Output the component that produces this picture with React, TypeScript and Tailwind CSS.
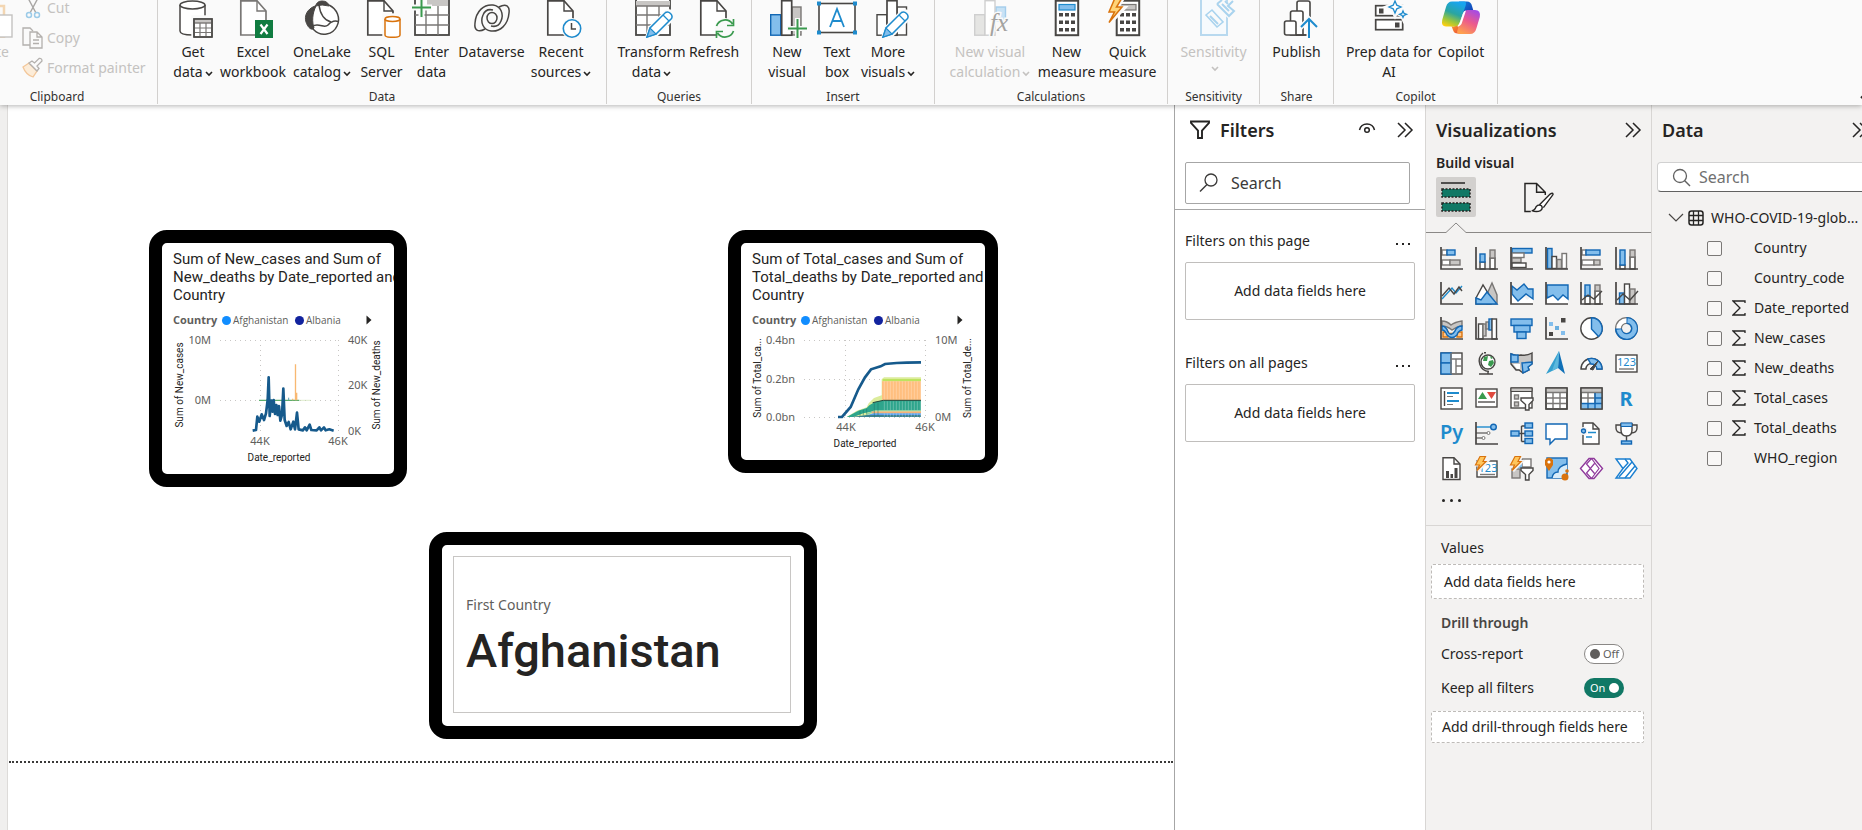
import React from "react";

type Kids = { children?: React.ReactNode };

const DK = "#484644";
const GY = "#797775";
const GF = "#c8c6c4";
const BF = "#83beec";
const BS = "#1267b4";
const LB = "#1e8bcd";
const GR = "#3a9a4e";
const OR = "#d9730d";

function R(p: { x: number; y: number; w: number; h: number; f?: string; s?: string; sw?: number }) {
  return <rect x={p.x} y={p.y} width={p.w} height={p.h} fill={p.f ?? "#fff"} stroke={p.s ?? DK} strokeWidth={p.sw ?? 1.4} />;
}
function L(p: { d: string; s?: string; f?: string; sw?: number }) {
  return <path d={p.d} stroke={p.s ?? DK} fill={p.f ?? "none"} strokeWidth={p.sw ?? 1.4} />;
}

/* ---------- ribbon icons (44 x 38) ---------- */

function Big({ children }: Kids) {
  return (
    <svg width="44" height="38" viewBox="0 0 44 38" fill="none" aria-hidden="true" className="shrink-0">
      {children}
    </svg>
  );
}
function Doc({ x = 8, s = DK }: { x?: number; s?: string }) {
  return (
    <g transform={`translate(${x} 0)`}>
      <L d="M0.8 0.8H17L26 11V35H0.8Z" s={s} f="#fff" sw={1.7} />
      <L d="M17 0.8V11H26" s={s} />
    </g>
  );
}
function Pencil() {
  return (
    <g>
      <path d="M17 38 L20 28 L36 12 Q40 10 43 13 Q44 16 42 19 L26 35Z" fill="#fafafa" stroke="#fafafa" strokeWidth="4" />
      <path d="M17 37 L20 28 L35.5 12.5 Q38 11 40.5 13.5 Q43 16 41.5 18.5 L26 34Z" fill="#fff" stroke={LB} strokeWidth="1.5" />
      <path d="M17 37 L20 28 L26 34Z" fill={BF} stroke={LB} strokeWidth="1.2" />
      <path d="M33 15L39 21" stroke={LB} strokeWidth="1.2" />
    </g>
  );
}
const GetDataIcon = (
  <Big>
    <path d="M9 5V31C9 33.5 14 35 21.5 35C29 35 34 33.5 34 31V5" fill="#fff" stroke={DK} strokeWidth="1.5" />
    <ellipse cx="21.5" cy="5" rx="12.5" ry="4" fill="#fff" stroke={DK} strokeWidth="1.5" />
    <R x={21} y={16} w={23} h={22} f="#fafafa" s="#fafafa" />
    <R x={23} y={19} w={18} h={18} />
    <R x={23} y={19} w={18} h={4} f={GF} s={GY} />
    <L d="M23 28H41M23 32.5H41M29 23V37M35 23V37" s={GY} sw={1.2} />
    <R x={23} y={19} w={18} h={18} f="none" />
  </Big>
);
const ExcelIcon = (
  <Big>
    <Doc x={9} s={GY} />
    <rect x="24" y="20" width="18" height="18" fill="#107c41" />
    <path d="M29.5 24.5L36.5 34M36.5 24.5L29.5 34" stroke="#fff" strokeWidth="2.2" />
  </Big>
);
const OneLakeIcon = (
  <Big>
    <ellipse cx="22" cy="18.5" rx="16" ry="16" fill="#fff" />
    <path d="M15 6C7 9 4 16 6 22C8 28 12 31 14 28C12 22 12 14 16 6Z" fill={DK} stroke={DK} />
    <path d="M15.500 6Q17 1 22 1Q28 1 29 6Q22 4 15.500 6Z" fill={DK} stroke={DK} />
    <path d="M29 5C37 9 41 18 37 26C33 35 21 37 14 30C11 27 13 25 17 25C22 25 25 28 28 25C31 21 36 20 38.500 22M19 5C20 13 24 20 31 22" stroke={DK} strokeWidth="1.5" />
  </Big>
);
const SqlIcon = (
  <Big>
    <Doc x={7} />
    <R x={23} y={14} w={20} h={24} f="#fafafa" s="#fafafa" />
    <path d="M25 19V35C25 36.5 28 37.3 32.5 37.3C37 37.3 40 36.5 40 35V19" fill="#fff" stroke={OR} strokeWidth="1.5" />
    <ellipse cx="32.5" cy="19" rx="7.5" ry="2.5" fill="#fff" stroke={OR} strokeWidth="1.5" />
  </Big>
);
const EnterIcon = (
  <Big>
    <R x={5} y={-3} w={34} h={38} sw={1.8} />
    <rect x="17" y="0" width="21" height="6" fill={GF} />
    <L d="M5 15H39M5 25H39M16 6V35M28 6V35" s={GY} />
    <path d="M11.5 -2V18M1 7.5H22" stroke="#fafafa" strokeWidth="6" />
    <path d="M11.5 -2V17M2 7.5H21" stroke={GR} strokeWidth="2" />
  </Big>
);
const swirlArm = "M15 29C8 33 4 30 5 23C6 11 14 4 23 5C31 6 34 14 31 21C29 26 25 27 21 26";
const DataverseIcon = (
  <Big>
    <path d={swirlArm} stroke={DK} strokeWidth="1.5" />
    <path d={swirlArm} transform="rotate(180 22 18)" stroke={DK} strokeWidth="1.5" />
    <ellipse cx="22" cy="18" rx="5" ry="5.5" stroke={DK} strokeWidth="1.5" />
  </Big>
);
const RecentIcon = (
  <Big>
    <Doc x={8} />
    <circle cx="33" cy="28.5" r="10.5" fill="#fafafa" />
    <circle cx="33" cy="28.5" r="8.7" fill="#fff" stroke={LB} strokeWidth="1.6" />
    <L d="M32.5 23V29H37" sw={1.5} />
  </Big>
);
const TransformIcon = (
  <Big>
    <R x={6} y={-2} w={34} h={37} sw={1.8} />
    <rect x="6" y="1" width="34" height="5" fill={GF} />
    <L d="M6 6H40M6 15H40M6 25H40M17 6V35M29 6V35" s={GY} />
    <Pencil />
  </Big>
);
const RefreshIcon = (
  <Big>
    <Doc x={8} />
    <circle cx="33" cy="28.5" r="10.5" fill="#fafafa" />
    <path d="M24.5 26A9 9 0 0 1 40.5 24M41.5 19V25.5H35M41.5 31A9 9 0 0 1 25.5 33M24.5 38V31.5H31" stroke={GR} strokeWidth="1.7" />
  </Big>
);
const NewVisualIcon = (
  <Big>
    <R x={5.7} y={14.7} w={10} h={20.5} f={BF} s={BS} />
    <R x={27} y={7} w={9} h={28} f={GF} s={GY} />
    <R x={16.7} y={0.7} w={10} h={34.5} sw={1.7} />
    <path d="M32.5 18V38M22 28.5H43" stroke="#fafafa" strokeWidth="5" />
    <path d="M32.5 19V38M23 28.5H42" stroke={GR} strokeWidth="2" />
  </Big>
);
const TextBoxIcon = (
  <Big>
    <R x={4} y={3.5} w={36} h={29} sw={1.6} />
    {[4, 40].map((x) => [3.5, 32.5].map((y) => <rect key={`${x}-${y}`} x={x - 2} y={y - 2} width="4" height="4" fill={LB} />))}
    <path d="M15 27L22 9L29 27M17.5 21H26.5" stroke={LB} strokeWidth="1.8" />
  </Big>
);
const MoreVisualsIcon = (
  <Big>
    <R x={11} y={14.7} w={10} h={20.5} />
    <R x={31} y={7} w={9.5} h={28} />
    <R x={21} y={0.7} w={10} h={34.5} sw={1.7} />
    <Pencil />
  </Big>
);
const NewCalcIcon = (
  <Big>
    <R x={6.7} y={14.7} w={10} h={20.5} f="#e5e5e3" s="#cfcfcf" />
    <R x={28} y={7} w={9.5} h={14} f="#c7e2f5" s="#a3cdec" />
    <R x={17} y={0.7} w={10} h={34.5} s="#cfcfcf" />
    <text x="22" y="31" fontFamily="Liberation Serif, serif" fontStyle="italic" fontSize="25" fill="#a3a2a0" stroke="#fafafa" strokeWidth="3" paintOrder="stroke">fx</text>
  </Big>
);
function Calc({ x = 10, screen = BF }: { x?: number; screen?: string }) {
  return (
    <g transform={`translate(${x} 0)`}>
      <R x={0.7} y={0.7} w={22.5} h={34.5} sw={2} />
      <R x={4} y={4.5} w={16} h={5.5} f={screen} s={screen === BF ? LB : GY} sw={1.2} />
      {[4, 10, 16].map((cx) => [13, 20.5, 28].map((cy) => <rect key={`${cx}-${cy}`} x={cx} y={cy} width="4" height="3.5" fill={DK} />))}
    </g>
  );
}
const QuickIcon = (
  <Big>
    <Calc x={10} screen={GF} />
    <path d="M9 -2L1 13H8L2 25L18 8H11L17 -2Z" fill="#ffd479" stroke="#fafafa" strokeWidth="4" />
    <path d="M9 -2L3 12H8.5L3 22.5L16 7H10.5L16 -2Z" fill="#ffd479" stroke={OR} strokeWidth="1.5" />
  </Big>
);
const SensitivityIcon = (
  <Big>
    <R x={9} y={-1} w={26} h={36} f="#f6fafd" s="#b8d9ef" sw={2} />
    <path d="M30 -1L44 12L38 18L24 5Z" fill="#fafafa" stroke="#fafafa" strokeWidth="3" />
    <path d="M14 15L20 10L31 22L25 27Z" fill="#fafafa" stroke="#a9d3ee" strokeWidth="1.6" />
    <path d="M18 16L26 24M25 4L37 16L42 11L36 6L41 1M25 4L30 0" stroke="#a9d3ee" strokeWidth="2" />
    <path d="M30 4L37 11M33 1L36 4" stroke="#a9d3ee" strokeWidth="2" />
  </Big>
);
const PublishIcon = (
  <Big>
    <path d="M22 35V3Q22 1 24 1H33Q35 1 35 3V35Z" fill="#fff" stroke={DK} strokeWidth="1.6" />
    <path d="M15.5 35V13Q15.5 11 17.5 11H26Q28 11 28 13V35Z" fill="#fff" stroke={DK} strokeWidth="1.6" />
    <path d="M9.5 23Q9.5 21 11.5 21H19Q21 21 21 23V35H11.5Q9.5 35 9.5 33Z" fill="#fff" stroke={DK} strokeWidth="1.6" />
    <path d="M21 35H33" stroke={DK} strokeWidth="1.6" />
    <path d="M34 17V38M25 28L34 19L43 28" stroke="#fafafa" strokeWidth="5" />
    <path d="M34 19V38M26 27L34 19L42 27" stroke={LB} strokeWidth="2" />
  </Big>
);
const PrepIcon = (
  <Big>
    <R x={8.7} y={5.7} w={27} h={10} sw={1.7} />
    <R x={8.7} y={19.7} w={27} h={10} sw={1.7} />
    <rect x="12" y="8.5" width="4.5" height="5" fill={DK} />
    <rect x="28" y="22.5" width="4.5" height="5" fill={DK} />
    <path d="M28 -1L30.5 4.5L36 7L30.5 9.5L28 15L25.5 9.5L20 7L25.5 4.5ZM36.5 9L38 12.5L41 14L38 15.5L36.5 19L35 15.5L32 14L35 12.5Z" fill="#fafafa" stroke="#fafafa" strokeWidth="4" />
    <path d="M28 1L29.8 5.2L34 7L29.8 8.8L28 13L26.2 8.8L22 7L26.2 5.2ZM36 11L37 13.3L39.5 14.3L37 15.3L36 17.5L35 15.3L32.5 14.3L35 13.3Z" fill="#fff" stroke={LB} strokeWidth="1.3" />
  </Big>
);
const CopilotIcon = (
  <Big>
    <defs>
      <linearGradient id="cpA" x1="0.6" y1="0" x2="0.2" y2="1">
        <stop offset="0" stopColor="#18a5f0" />
        <stop offset="0.45" stopColor="#2aa5a0" />
        <stop offset="0.75" stopColor="#9cc63b" />
        <stop offset="1" stopColor="#ffcf0f" />
      </linearGradient>
      <linearGradient id="cpB" x1="0.8" y1="0" x2="0.3" y2="1">
        <stop offset="0" stopColor="#a24be8" />
        <stop offset="0.5" stopColor="#ec5a8c" />
        <stop offset="1" stopColor="#ffa04e" />
      </linearGradient>
      <linearGradient id="cpC" x1="0" y1="0" x2="1" y2="1">
        <stop offset="0" stopColor="#1286dc" />
        <stop offset="1" stopColor="#1435b0" />
      </linearGradient>
      <linearGradient id="cpD" x1="0" y1="0" x2="1" y2="1">
        <stop offset="0" stopColor="#f89a2a" />
        <stop offset="1" stopColor="#ec4a3c" />
      </linearGradient>
    </defs>
    <path d="M20 1.5H28Q32 1.5 33 6L34.5 11H29Q25 11 24 14Z" fill="url(#cpC)" />
    <path d="M14 26.5Q17 26.5 18 24L23 33.5H18.5Q15 33.5 14 30L12.5 26Z" fill="url(#cpD)" />
    <path d="M13 1.5H25Q28 1.5 26.5 6L21 22Q19.5 26.5 15 26.5H7Q2 26.5 3.2 20L7 7Q8.5 1.5 13 1.5Z" fill="url(#cpA)" />
    <path d="M31 34H21Q17 34 18.5 30L24 14Q25.5 10 29 10H36Q42 10 40.8 17L37.5 28Q36 34 31 34Z" fill="url(#cpB)" />
    <path d="M21 22L24.5 12Q25.3 10.5 27 10.5L22.5 24Q21.5 26.3 18 26.5Q20 25.5 21 22Z" fill="#fff" />
  </Big>
);

/* ---------- ribbon ---------- */

function Caret() {
  return (
    <svg width="8" height="6" viewBox="0 0 8 6" className="mt-1 ml-0.5 shrink-0" aria-hidden="true">
      <path d="M1 1L4 4L7 1" fill="none" stroke="currentColor" strokeWidth="1.6" />
    </svg>
  );
}
function Tool({ icon, a, b, caret, w, off }: { icon: React.ReactNode; a: string; b?: string; caret?: boolean; w: string; off?: boolean }) {
  return (
    <button type="button" disabled={off} className={`flex shrink-0 flex-col items-center text-sm leading-5 whitespace-nowrap ${w} ${off ? "text-[#c4c2c0]" : "text-[#252423]"}`}>
      {icon}
      <span className="mt-1">{a}</span>
      {(b || caret) && (
        <span className="flex items-center">
          {b}
          {caret && <Caret />}
        </span>
      )}
    </button>
  );
}
function Group({ name, w, children }: Kids & { name: string; w: string }) {
  return (
    <section aria-label={name} className={`flex h-[104px] shrink-0 flex-col border-r border-[#d2d0ce] ${w}`}>
      <div className="flex flex-1 items-start">{children}</div>
      <div className="text-center text-xs leading-[14px] text-[#323130]">{name}</div>
    </section>
  );
}

function Ribbon() {
  return (
    <header className="relative z-10 flex h-[105px] shrink-0 overflow-hidden bg-[#fafafa] shadow-[0_1px_5px_rgba(0,0,0,0.3)]">
      <div className="-ml-[43px] flex min-w-0">
        <Group name="Clipboard" w="w-[201px]">
          <button type="button" disabled className="mr-1 flex w-[60px] flex-col items-end text-sm leading-5 text-[#c4c2c0]">
            <svg width="44" height="38" viewBox="0 0 44 38" fill="none" aria-hidden="true">
              <path d="M4 6H31V37H4Z" stroke="#f3d6b2" strokeWidth="2.5" />
              <R x={20} y={15} w={19} h={22} s="#c4c2c0" />
            </svg>
            <span className="mt-1 pr-2">Paste</span>
          </button>
          <div className="-mt-[7px] flex flex-col text-sm leading-[30px] whitespace-nowrap text-[#c4c2c0]">
            <button type="button" disabled className="flex items-center gap-0.5">
              <svg width="24" height="24" viewBox="0 0 24 24" fill="none" aria-hidden="true">
                <path d="M7 2L15 17M17 2L9 17" stroke="#a8a6a4" strokeWidth="1.4" />
                <circle cx="8" cy="19" r="2.5" stroke="#9ccbe8" strokeWidth="1.5" />
                <circle cx="16" cy="19" r="2.5" stroke="#9ccbe8" strokeWidth="1.5" />
              </svg>
              Cut
            </button>
            <button type="button" disabled className="flex items-center gap-0.5">
              <svg width="24" height="24" viewBox="0 0 24 24" fill="none" aria-hidden="true">
                <path d="M9 19H2V2H9L12 5" stroke="#b3b0ad" strokeWidth="1.3" />
                <path d="M9 6H16L21 11V22H9ZM16 6V11H21M12 14H18M12 17.5H18" stroke="#b3b0ad" strokeWidth="1.3" />
              </svg>
              Copy
            </button>
            <button type="button" disabled className="flex items-center gap-0.5">
              <svg width="24" height="24" viewBox="0 0 24 24" fill="none" aria-hidden="true">
                <path d="M2 11L8 7L16 15L12 21Q5 19 2 11Z" fill="#fcecd8" stroke="#f3c79a" strokeWidth="1.3" />
                <path d="M8 7L11 5L13.500 7L18 2.500Q21 2 21 5L16 10L18 12.500L16 15Z" fill="#fafafa" stroke="#b3b0ad" strokeWidth="1.3" />
              </svg>
              Format painter
            </button>
          </div>
        </Group>
        <Group name="Data" w="w-[449px] [&>div:first-child]:pl-3">
          <Tool icon={GetDataIcon} a="Get" b="data" caret w="w-[46px]" />
          <Tool icon={ExcelIcon} a="Excel" b="workbook" w="w-[74px]" />
          <Tool icon={OneLakeIcon} a="OneLake" b="catalog" caret w="w-16" />
          <Tool icon={SqlIcon} a="SQL" b="Server" w="w-[55px]" />
          <Tool icon={EnterIcon} a="Enter" b="data" w="w-[45px]" />
          <Tool icon={DataverseIcon} a="Dataverse" w="w-[75px]" />
          <Tool icon={RecentIcon} a="Recent" b="sources" caret w="w-16" />
        </Group>
        <Group name="Queries" w="w-[145px] [&>div:first-child]:pl-3">
          <Tool icon={TransformIcon} a="Transform" b="data" caret w="w-[65px]" />
          <Tool icon={RefreshIcon} a="Refresh" w="w-[60px]" />
        </Group>
        <Group name="Insert" w="w-[183px] [&>div:first-child]:pl-[10px]">
          <Tool icon={NewVisualIcon} a="New" b="visual" w="w-[50px]" />
          <Tool icon={TextBoxIcon} a="Text" b="box" w="w-[50px]" />
          <Tool icon={MoreVisualsIcon} a="More" b="visuals" caret w="w-[52px]" />
        </Group>
        <Group name="Calculations" w="w-[233px] [&>div:first-child]:pl-[9px]">
          <Tool icon={NewCalcIcon} a="New visual" b="calculation" caret off w="w-[92px]" />
          <Tool icon={<Big><Calc /></Big>} a="New" b="measure" w="w-[61px]" />
          <Tool icon={QuickIcon} a="Quick" b="measure" w="w-[61px]" />
        </Group>
        <Group name="Sensitivity" w="w-[92px] [&>div:first-child]:justify-center">
          <Tool icon={SensitivityIcon} a="Sensitivity" caret off w="w-[70px]" />
        </Group>
        <Group name="Share" w="w-[74px] [&>div:first-child]:justify-center">
          <Tool icon={PublishIcon} a="Publish" w="w-[60px]" />
        </Group>
        <Group name="Copilot" w="w-[164px] [&>div:first-child]:pl-2">
          <Tool icon={PrepIcon} a="Prep data for" b="AI" w="w-[94px]" />
          <Tool icon={CopilotIcon} a="Copilot" w="w-[50px]" />
        </Group>
      </div>
      <button type="button" aria-label="Collapse ribbon" className="-mr-[10px] mb-1 ml-auto self-end">
        <svg width="12" height="10" viewBox="0 0 12 10" fill="none" aria-hidden="true">
          <path d="M1 7L6 2L11 7" stroke="#252423" strokeWidth="2" />
        </svg>
      </button>
    </header>
  );
}

/* ---------- report canvas ---------- */

function Legend({ arrow }: { arrow: string }) {
  return (
    <div className="mt-2 flex h-4 items-center font-['Open_Sans','Noto_Sans',sans-serif] text-[10px] leading-4 text-[#605e5c]">
      <b className="w-[49px] text-[11px] font-bold">Country</b>
      <i className="mr-0.5 size-[9px] rounded-full bg-[#118dff]" />
      <span className="w-[62px]">Afghanistan</span>
      <i className="mr-0.5 size-[9px] rounded-full bg-[#12239e]" />
      <span>Albania</span>
      <button type="button" aria-label="Next" className={`ml-auto ${arrow}`}>
        <svg width="6" height="10" viewBox="0 0 6 10" aria-hidden="true"><path d="M0.5 0.5L5.5 5L0.5 9.5Z" fill="#252423" /></svg>
      </button>
    </div>
  );
}
function Lab({ x, y, a = "middle", children }: Kids & { x: number; y: number; a?: "start" | "middle" | "end" }) {
  return <text x={x} y={y + 4} textAnchor={a} fontSize="11" fill="#605e5c">{children}</text>;
}
function Axis({ x, y, r, children }: Kids & { x: number; y: number; r?: boolean }) {
  return (
    <text transform={`translate(${x} ${y})${r ? " rotate(-90)" : ""}`} dy="4" textAnchor="middle" fontSize="10" fontFamily="Roboto, sans-serif" fill="#252423">
      {children}
    </text>
  );
}

const casesLine =
  "M338 632L348 630L352 590L358 605L365 583L372 600L378 580L383 540L386 472L389 588L394 542L398 575L401 540L405 582L409 555L413 585L417 558L421 602L426 585L430 506L434 600L440 618L446 606L452 628L460 605L465 628L471 578L476 628L489 631L495 622L500 631L509 614L514 630L530 631L538 622L543 631L552 622L557 631L568 628L581 632";

function CasesCard() {
  return (
    <article className="absolute top-[125px] left-[140px] w-[258px] rounded-[18px] border-[13px] border-black bg-white">
      <div className="overflow-hidden rounded-[5px] pt-[7px] pl-[11px]">
        <h2 className="font-[Roboto] text-[15px] leading-[18px] whitespace-nowrap text-[#252423]">
          Sum of New_cases and Sum of<br />New_deaths by Date_reported and<br />Country
        </h2>
        <Legend arrow="mr-[22px]" />
        <svg width="232" height="146" viewBox="0 0 232 146" fill="none" className="-ml-[11px]" role="img" aria-label="New cases and deaths">
          <path d="M58 12.5H177M58 72.5H177M98.5 12V103M176.5 12V103" stroke="#c8c6c4" strokeDasharray="1 4" />
          <Lab x={49} y={12} a="end">10M</Lab>
          <Lab x={49} y={72} a="end">0M</Lab>
          <Lab x={186} y={12} a="start">40K</Lab>
          <Lab x={186} y={57} a="start">20K</Lab>
          <Lab x={186} y={103} a="start">0K</Lab>
          <Lab x={98} y={113}>44K</Lab>
          <Lab x={176} y={113}>46K</Lab>
          <Axis x={117} y={129}>Date_reported</Axis>
          <Axis x={17} y={57} r>Sum of New_cases</Axis>
          <Axis x={214} y={57} r>Sum of New_deaths</Axis>
          <g transform="translate(-22 -108) scale(0.33333)">
            <path d="M357 541H478" stroke="#5cae6c" strokeWidth="4" />
            <path d="M480 541H512" stroke="#cfe3b4" strokeWidth="2" />
            <path d="M466.5 541V433M470 541V518M458 541V536" stroke="#f8b872" strokeWidth="4" />
            <path d="M446 541V533" stroke="#5b9fb4" strokeWidth="3" />
            <path d={casesLine} stroke="#165a8c" strokeWidth="8" strokeLinejoin="round" />
          </g>
        </svg>
      </div>
    </article>
  );
}

function TotalsCard() {
  const bars = Array.from({ length: 13 }, (_, i) => 493 + i * 9);
  return (
    <article className="absolute top-[125px] left-[719px] w-[270px] rounded-[18px] border-[13px] border-black bg-white">
      <div className="overflow-hidden rounded-[5px] pt-[7px] pl-[11px]">
        <h2 className="font-[Roboto] text-[15px] leading-[18px] whitespace-nowrap text-[#252423]">
          Sum of Total_cases and Sum of<br />Total_deaths by Date_reported and<br />Country
        </h2>
        <Legend arrow="mr-[22px]" />
        <svg width="244" height="132" viewBox="0 0 244 132" fill="none" className="-ml-[11px]" role="img" aria-label="Total cases and deaths">
          <path d="M63 12.5H185M63 51.5H185M63 89.5H185M104.5 12V89M184.5 12V89" stroke="#c8c6c4" strokeDasharray="1 4" />
          <Lab x={54} y={12} a="end">0.4bn</Lab>
          <Lab x={54} y={51} a="end">0.2bn</Lab>
          <Lab x={54} y={89} a="end">0.0bn</Lab>
          <Lab x={194} y={12} a="start">10M</Lab>
          <Lab x={194} y={89} a="start">0M</Lab>
          <Lab x={105} y={99}>44K</Lab>
          <Lab x={184} y={99}>46K</Lab>
          <Axis x={124} y={115}>Date_reported</Axis>
          <Axis x={16} y={50} r>Sum of Total_ca...</Axis>
          <Axis x={226} y={50} r>Sum of Total_de...</Axis>
          <g transform="translate(-21 -108) scale(0.33333)">
            <path d="M380 591L410 572L440 562L446 550L462 534L485 526L485 478L492 472H603V591Z" fill="#dcec9c" />
            <path d="M486 484H603V540H486Z" fill="#ffbf7f" />
            <path d="M488 480H603" stroke="#b5e04c" strokeWidth="5" />
            <path d="M380 591L415 572L440 564L448 556L465 546L490 541H603V572H470L430 580L400 591Z" fill="#2ea58c" />
            <path d="M458 548L490 541H603" stroke="#25483f" strokeWidth="3" />
            <path d="M440 583L465 572H603" stroke="#8fd0a2" strokeWidth="4" />
            <path d="M455 577H603" stroke="#f4b07a" strokeWidth="5" />
            <path d="M440 586L460 580H603V586Z" fill="#5c9ff0" />
            <path d="M395 591L440 585H603V591Z" fill="#3c8291" />
            {bars.map((x) => <path key={x} d={`M${x} 484V538M${x} 544V571M${x} 580V590`} stroke="#ffffff" strokeOpacity="0.4" strokeWidth="2" />)}
            <path d="M420 572V588M430 570V586M440 566V584M463 550V590M474 548V588" stroke="#1d7466" strokeOpacity="0.5" strokeWidth="3" />
            <path d="M354 591H366L392 561L415 508L435 472L453 448L482 439L495 432L530 429L560 428L603 427" stroke="#165a8c" strokeWidth="8" />
          </g>
        </svg>
      </div>
    </article>
  );
}

function Canvas() {
  return (
    <main className="flex min-w-0 flex-1 flex-col bg-white px-px">
      <div className="relative h-[658px] shrink-0 overflow-hidden border-b-2 border-dotted border-[#3b3a39]">
        <CasesCard />
        <TotalsCard />
        <article className="absolute top-[427px] left-[420px] h-[207px] w-[388px] rounded-[18px] border-[13px] border-black bg-white pt-[11px] pr-[13px] pb-[13px] pl-[11px]">
          <div className="flex h-full flex-col justify-center border border-[#c8c6c4] pt-3 pl-3">
            <p className="text-sm leading-5 text-[#605e5c]">First Country</p>
            <p className="font-[Roboto] text-[47px] leading-[72px] font-medium text-[#252423]">Afghanistan</p>
          </div>
        </article>
      </div>
    </main>
  );
}

/* ---------- filters ---------- */

function DoubleChevron() {
  return (
    <svg width="18" height="18" viewBox="0 0 18 18" fill="none" aria-hidden="true">
      <path d="M2 2L9 9L2 16M9 2L16 9L9 16" stroke="#252423" strokeWidth="1.5" />
    </svg>
  );
}
function FilterGroup({ title }: { title: string }) {
  return (
    <section className="mb-[33px] px-[10px]">
      <div className="flex h-5 items-center justify-between pr-[5px]">
        <h3 className="text-sm leading-5">{title}</h3>
        <button type="button" aria-label="More options" className="flex gap-1 pt-1.5">
          <i className="size-[2px] bg-[#252423]" /><i className="size-[2px] bg-[#252423]" /><i className="size-[2px] bg-[#252423]" />
        </button>
      </div>
      <div className="mt-[11px] flex h-[58px] items-center justify-center rounded-xs border border-[#c0bebc] text-sm">Add data fields here</div>
    </section>
  );
}
function Filters() {
  return (
    <aside className="flex w-[251px] shrink-0 flex-col border-l border-[#a6a6a6] bg-white text-[#252423]">
      <div className="border-b border-[#a6a6a6] pb-[5px] pl-[10px]">
        <div className="flex h-[50px] items-center pr-[11px] pl-1">
          <svg width="22" height="20" viewBox="0 0 22 20" fill="none" aria-hidden="true">
            <path d="M2 1.5H20V3L13 10.5V18H9V10.5L2 3Z" stroke="#252423" strokeWidth="1.9" />
          </svg>
          <h2 className="ml-[9px] text-lg leading-6 font-semibold">Filters</h2>
          <button type="button" aria-label="Hide filters" className="mb-1 ml-auto">
            <svg width="18" height="12" viewBox="0 0 18 12" fill="none" aria-hidden="true">
              <path d="M1.5 8Q3 2 9 2Q15 2 16.5 8" stroke="#252423" strokeWidth="1.5" />
              <circle cx="9" cy="8" r="2.3" stroke="#252423" strokeWidth="1.5" />
            </svg>
          </button>
          <button type="button" aria-label="Collapse filters" className="ml-5"><DoubleChevron /></button>
        </div>
        <label className="mt-[7px] mr-[15px] flex h-[42px] items-center rounded-xs border border-[#a6a6a6] pl-[13px]">
          <svg width="20" height="20" viewBox="0 0 20 20" fill="none" aria-hidden="true" className="shrink-0">
            <circle cx="12" cy="7" r="6" stroke="#3b3a39" strokeWidth="1.3" />
            <path d="M8 11.5L1 18.5" stroke="#3b3a39" strokeWidth="1.4" />
          </svg>
          <input type="text" aria-label="Search filters" placeholder="Search" className="ml-3 w-full min-w-0 text-base outline-none placeholder:text-[#3b3a39]" />
        </label>
      </div>
      <div className="pt-[21px]">
        <FilterGroup title="Filters on this page" />
        <FilterGroup title="Filters on all pages" />
      </div>
    </aside>
  );
}

/* ---------- visual gallery (23 x 23) ---------- */

const axes = <L d="M1 0V22H23" sw={1.7} />;
const bolt = (
  <g>
    <path d="M6 0H11L9 4.5H12L3 14L5 8H1Z" fill="#f3f2f1" stroke="#f3f2f1" strokeWidth="3" />
    <path d="M5 -0.5H10.5L8 4.5H11L2 13.5L4.500 8H0.500Z" fill="#ffc65c" stroke={OR} strokeWidth="1.2" />
  </g>
);
const funnelGlyph = <path d="M11 11H23V13.5L19 17.5V23H15.5V17.5L11 13.5Z" fill="#fff" stroke={DK} strokeWidth="1.4" />;

const visuals: [string, React.ReactNode][] = [
  ["Stacked bar chart", <><R x={2} y={3} w={5} h={5} s={GY} /><R x={7} y={3} w={8} h={5} f={BF} s={BS} /><R x={2} y={13} w={8} h={5} s={GY} /><R x={10} y={13} w={10} h={5} f={GF} s={GY} />{axes}</>],
  ["Stacked column chart", <><R x={5} y={15} w={5} h={7} /><R x={5} y={7} w={5} h={8} f={BF} s={BS} /><R x={15} y={11} w={5} h={11} /><R x={15} y={3} w={5} h={8} f={GF} s={GY} />{axes}</>],
  ["Clustered bar chart", <><R x={2} y={1.5} w={20} h={4.5} f={BF} s={BS} /><R x={2} y={6} w={12} h={4.5} s={GY} /><R x={2} y={11} w={9} h={4.5} f={GF} s={GY} /><R x={2} y={16} w={14} h={4.5} />{axes}</>],
  ["Clustered column chart", <><R x={2.5} y={1.5} w={4.5} h={20} f={BF} s={BS} /><R x={7} y={9.5} w={4.5} h={12} /><R x={12} y={12.5} w={4.5} h={9} f={GF} s={GY} /><R x={17} y={6.5} w={4.5} h={15} s={GY} />{axes}</>],
  ["100% stacked bar chart", <><R x={2} y={3} w={4} h={5} s={GY} /><R x={6} y={3} w={14} h={5} f={BF} s={BS} /><R x={2} y={13} w={12} h={5} s={GY} /><R x={14} y={13} w={6} h={5} f={GF} s={GY} />{axes}</>],
  ["100% stacked column chart", <><R x={5} y={18} w={5} h={4} /><R x={5} y={3} w={5} h={15} f={BF} s={BS} /><R x={15} y={10} w={5} h={12} /><R x={15} y={3} w={5} h={7} f={GF} s={GY} />{axes}</>],
  ["Line chart", <><L d="M2 17L12 6L16 11L22 4" s={LB} /><L d="M2 14L9 6L14 12L19 5L22 9" />{axes}</>],
  ["Area chart", <><L d="M12 12L17 1L22 13V22H12Z" s={GY} f={GF} /><L d="M1 16L8 3L16 16V22H1Z" f="#fff" /><L d="M1 16L6 18L12 10L22 22H1Z" s={BS} f={BF} /></>],
  ["Stacked area chart", <><path d="M2 10L7 18L13 12L17 18L23 13V22H2Z" fill="#fff" /><L d="M2 4L7 8L14 2L18 7L23 7V17L16 12L8 19L2 12Z" s={BS} f={BF} />{axes}</>],
  ["100% stacked area chart", <><path d="M2 10H23V22H2Z" fill="#fff" /><L d="M2 3H23V17L18 13L13 18L8 13L2 16Z" s={BS} f={BF} />{axes}</>],
  ["Line and stacked column chart", <><R x={5} y={14} w={5} h={8} /><R x={5} y={3} w={5} h={11} f={BF} s={BS} /><R x={15} y={9} w={5} h={13} /><R x={15} y={3} w={5} h={6} f={GF} s={GY} /><L d="M2 18L8 13L14 17L22 9" />{axes}</>],
  ["Line and clustered column chart", <><R x={4.5} y={11} w={5} h={11} f={BF} s={BS} /><R x={9.5} y={2} w={5} h={20} /><R x={15} y={7} w={5} h={15} f={GF} s={GY} /><L d="M2 18L8 12L15 18L23 9" />{axes}</>],
  ["Ribbon chart", <><L d="M3 15H8V20H3ZM17 15H22V20H17Z" s={OR} f="#ffc88c" /><L d="M2 4Q7 4 11 8Q15 5 22 4V9Q16 10 12 13Q7 9 2 9Z" s={GY} f={GF} /><L d="M2 11Q7 11 8 17H15Q17 10 22 10" s={OR} sw={2.5} /><L d="M2 9Q6 9 8 15Q11 20 15 14Q17 9 22 9V13Q18 14 17 18Q12 23 7 18Q5 13 2 13Z" s={BS} f={BF} />{axes}</>],
  ["Waterfall chart", <><R x={3.5} y={7} w={4.5} h={15} /><R x={8} y={7} w={3} h={12} f={GF} s={GY} /><R x={11} y={5} w={3} h={7} f={GF} s={GY} /><R x={14} y={2} w={3} h={11} f={BF} s={BS} /><R x={17} y={2} w={4.5} h={20} />{axes}</>],
  ["Funnel", <><R x={1} y={2} w={21} h={6.5} f={BF} s={BS} /><R x={4} y={8.5} w={16} h={6.5} f={BF} s={BS} /><R x={7} y={15} w={9} h={6.5} f={BF} s={BS} /></>],
  ["Scatter chart", <><rect x="4" y="5" width="4" height="4" fill={BF} /><rect x="16" y="1" width="4.5" height="4.5" fill={DK} /><rect x="10" y="9" width="4" height="4" fill="#6aaede" /><rect x="16" y="14" width="4" height="4" fill={BF} /><rect x="4" y="15" width="4" height="4" fill={DK} />{axes}</>],
  ["Pie chart", <><circle cx="11.5" cy="11.5" r="10.7" fill="#fff" stroke={DK} strokeWidth="1.4" /><L d="M11.5 0.8A10.7 10.7 0 0 1 18.5 19.5L11.5 12Z" s={BS} f={BF} /></>],
  ["Donut chart", <><circle cx="11.5" cy="11.5" r="8" stroke={GY} strokeWidth="7" fill="none" /><circle cx="11.5" cy="11.5" r="8" stroke="#fff" strokeWidth="4.5" fill="none" /><path d="M11.5 3.5A8 8 0 1 1 3.5 11.5" stroke={BS} strokeWidth="7" fill="none" /><path d="M12.5 3.5A8 8 0 1 1 3.8 12.5" stroke={BF} strokeWidth="4.5" fill="none" /></>],
  ["Treemap", <><R x={1} y={1} w={21} h={21} /><R x={1} y={1} w={10} h={10} f={BF} s={BS} /><R x={1} y={11} w={10} h={11} f={BF} s={BS} /><L d="M11 7H22M16 7V22M16 14H22M11 1V22" s={GY} /></>],
  ["Map", <><circle cx="13" cy="10" r="7" fill="#fff" stroke={DK} strokeWidth="1.4" /><path d="M9 5L13 4L12 9L8 9ZM14 9L18 8L19 11L16 15L13 13ZM15 4L18 6L16 7Z" fill={GR} /><L d="M8 1A10.5 10.5 0 0 0 14 19.5M4 22H18M13 19V22M9 0.7H11" /></>],
  ["Filled map", <><L d="M1 2Q6 4 11 3Q17 4 22 1V12L18 15L19 18L13 21L9 18L6 18L1 12Z" f={GF} /><L d="M1 2Q4 3.500 8 3V10H1Z" f={BF} s={BS} /><L d="M12 11L22 10V12L18 15L19 18L13 21Z" f={BF} s={BS} /><path d="M3 12H10V17H7Z" fill="#fff" /></>],
  ["Azure map", <><path d="M14 -1L1 22L13 16Z" fill="#35a0cf" /><path d="M14 -1L20 22L13 16Z" fill="#0f70b7" /><path d="M14 -1L13 16L7 19Z" fill="#5cb8dd" /></>],
  ["Gauge", <><L d="M1 17A10.5 10.5 0 0 1 22 17H17A5.5 5.5 0 0 0 6 17Z" f="#fff" /><L d="M8 7A10.5 10.5 0 0 1 22 17H17A5.5 5.5 0 0 0 11 12Z" s={BS} f={BF} /><path d="M10 17L18 9L13 18Z" fill={DK} stroke={DK} /></>],
  ["Card", <><R x={1} y={3} w={21} h={17} /><text x="11.5" y="14" fontSize="11" textAnchor="middle" fill={LB}>123</text><L d="M4 17H19" s={GY} /></>],
  ["Multi-row card", <><R x={1} y={1} w={21} h={21} /><L d="M4.5 4V19" /><L d="M7 6H19M7 14H19" s={LB} sw={2} /><L d="M7 9.5H13M7 17.5H13" s={GY} sw={1.2} /></>],
  ["KPI", <><R x={1} y={2} w={21} h={18} /><path d="M3 12L7.5 5L12 12Z" fill={GR} /><path d="M12 5H21L16.5 12Z" fill="#e04a3f" /><L d="M3 15H20" s={GY} sw={1.8} /></>],
  ["Slicer", <><R x={1} y={1} w={21} h={20} /><path d="M1 1H22V4.5H1Z" fill={GF} stroke={DK} /><R x={4.5} y={8} w={4} h={4} f={GF} s={GY} /><R x={4.5} y={15} w={4} h={4} f={GF} s={GY} />{funnelGlyph}</>],
  ["Table", <><R x={1} y={1} w={21} h={21} /><path d="M1 1H22V5H1Z" fill={GF} /><L d="M1 5.5H22M1 11H22M1 16.5H22M8 5V22M15 5V22" s={GY} /><R x={1} y={1} w={21} h={21} f="none" /></>],
  ["Matrix", <><R x={1} y={1} w={21} h={21} /><path d="M1 1H22V5H1Z" fill={GF} /><path d="M15 6H22V22H1V16.5H15Z" fill={BF} /><L d="M1 5.5H22M1 11H15M8 5V16M15 5V16" s={GY} /><L d="M15 6V22M8 16.5V22M1 16.5H22M15 11H22" s={BS} /><R x={1} y={1} w={21} h={21} f="none" /></>],
  ["R script visual", <text x="11" y="19" fontSize="20" fontWeight="700" textAnchor="middle" fill={LB}>R</text>],
  ["Python visual", <text x="11.5" y="17" fontSize="20" fontWeight="600" textAnchor="middle" fill={LB}>Py</text>],
  ["Key influencers", <><L d="M1 5H17" s={LB} /><L d="M1 11H12M1 16H8" s={GY} /><circle cx="18.5" cy="5" r="2.8" fill={BF} stroke={BS} strokeWidth="1.4" /><circle cx="13.5" cy="11" r="1.5" fill="#fff" stroke={GY} /><circle cx="8.5" cy="16" r="1.5" fill="#fff" stroke={GY} />{axes}</>],
  ["Decomposition tree", <><L d="M8 11.5H15M11.5 4V19.5M11.5 4H15M11.5 19.5H15" /><R x={1} y={9} w={8} h={5} f={BF} s={BS} /><R x={15} y={1} w={7.5} h={5} f={BF} s={BS} /><R x={15} y={9} w={7.5} h={5} f={BF} s={BS} /><R x={15} y={16.5} w={7.5} h={5} f={BF} s={BS} /></>],
  ["Q&A", <L d="M1 2H22V17H10L5 22V17H1Z" s={BS} f="#fff" />],
  ["Narrative", <><L d="M3 1H13L19 7V22H3Z" f="#fff" /><L d="M13 1V7H19" /><circle cx="3.5" cy="9" r="4" fill="#f3f2f1" /><circle cx="3.5" cy="9" r="2" fill={BF} stroke={BS} strokeWidth="1.3" /><L d="M8 10.5H16M6 15H12" s={LB} /></>],
  ["Metrics", <><L d="M6 1.5H17V8Q17 14 11.5 14Q6 14 6 8Z" f="#fff" /><path d="M6 1H17V4.5H6Z" fill={BF} stroke={BS} /><L d="M6 3H1V6Q1 11 7 11M17 3H22V6Q22 11 16 11M11.5 14V19" /><R x={6.5} y={19} w={10} h={3} f={BF} s={BS} /></>],
  ["Paginated report", <><L d="M3 0.8H14L20 7V22.5H3Z" f="#fff" /><L d="M14 1V7H20" /><path d="M6 14H9V21H6ZM10.5 17H13V21H10.5ZM14.5 11H17.5V21H14.5Z" fill={DK} /></>],
  ["Card (new)", <><R x={2} y={4} w={20} h={16} /><text x="13" y="15" fontSize="11" textAnchor="middle" fill={LB}>123</text><L d="M5 17.5H20" s={GY} />{bolt}</>],
  ["Slicer (new)", <><R x={12} y={2} w={9} h={8} s={GY} /><R x={2} y={12} w={8} h={9} f={GF} s={GY} /><rect x="8" y="6" width="4" height="5" fill={BF} />{bolt}{funnelGlyph}</>],
  ["ArcGIS Maps", <><R x={2} y={1} w={20} h={20} f={BF} s={BS} /><path d="M7 21Q8 15 13 15Q13 10 17 8L22 7V1H22V15L17 21Z" fill="#d9ecf9" /><L d="M7 21Q8 15 13 15Q13 9 22 7" s={BS} /><path d="M0 3Q4 -2 8 3V8L4 14L0 8Z" fill={OR} /><circle cx="4" cy="5" r="1.6" fill="#fff" /><circle cx="20" cy="20" r="3.5" fill={OR} /><circle cx="22" cy="14" r="1.8" fill={OR} /></>],
  ["Power Apps", <><L d="M0.500 11.5L9 1.500H14L22.500 11.5L14 21.500H9Z" s="#8f3a9c" f="#fff" /><L d="M11.500 1.500L19 11.500L11.500 21.500M11.500 1.500L6.500 7L14.500 16.500M11.500 21.500L6.500 16L14.500 6.500" s="#8f3a9c" sw={1.200} /></>],
  ["Power Automate", <><L d="M1 2H15L22 11.5L15 21H1L8 11.5Z" s="#1a7fd0" f="#fff" /><L d="M17 5L4 20M20 9L10 21M10 2L13 6L8 11.5" s="#1a7fd0" /></>],
];

function Visualizations() {
  return (
    <aside className="w-[226px] shrink-0 border-l border-[#d8d6d4] bg-[#f3f2f1] text-[#252423]">
      <div className="flex h-[50px] items-center justify-between pr-[9px] pl-[10px]">
        <h2 className="text-lg leading-6 font-semibold">Visualizations</h2>
        <button type="button" aria-label="Collapse visualizations"><DoubleChevron /></button>
      </div>
      <h3 className="pl-[10px] text-sm leading-4 font-semibold">Build visual</h3>
      <div className="mt-[6px] flex gap-12 pl-[10px]">
        <button type="button" aria-label="Build visual" className="flex size-10 items-center justify-center rounded-xs bg-[#d2d0ce]">
          <svg width="30" height="30" viewBox="0 0 30 30" fill="none" aria-hidden="true">
            <path d="M0 1H24" stroke="#252423" strokeWidth="1.5" />
            <path d="M1 7H29V15H1ZM1 21H29V29H1Z" fill="#117865" stroke="#252423" strokeWidth="1.5" strokeDasharray="2 1.5" />
          </svg>
        </button>
        <button type="button" aria-label="Format visual" className="flex h-10 w-[30px] items-center">
          <svg width="31" height="31" viewBox="0 0 31 31" fill="none" aria-hidden="true">
            <path d="M7 30H1V1H13L22 10V13M13 1V10H22" stroke="#252423" strokeWidth="1.5" />
            <path d="M8 29Q11 29 12.5 25Q15 22 18 24Q20 27 17 29Q13 31 8 29ZM16 23L27 12Q30 10 30 12.5L20 26" fill="#fff" stroke="#252423" strokeWidth="1.4" />
          </svg>
        </button>
      </div>
      <svg width="225" height="16" viewBox="0 0 225 16" fill="none" preserveAspectRatio="none" className="block" aria-hidden="true">
        <path d="M0 15.5H20L30 6L40 15.5H225" stroke="#8a8886" />
      </svg>
      <div className="grid grid-cols-[repeat(6,35px)] pt-[14px] pl-[14px]">
        {visuals.map(([name, art]) => (
          <button key={name} type="button" aria-label={name} className="flex h-[35px] w-[23px] items-start">
            <svg width="23" height="23" viewBox="0 0 23 23" fill="none" className="block overflow-visible" aria-hidden="true">{art}</svg>
          </button>
        ))}
      </div>
      <button type="button" aria-label="Get more visuals" className="ml-4 flex gap-[5px] pt-[7px] pb-[23px]">
        <i className="size-[3px] rounded-full bg-[#252423]" /><i className="size-[3px] rounded-full bg-[#252423]" /><i className="size-[3px] rounded-full bg-[#252423]" />
      </button>
      <div className="border-t border-[#d8d6d4] pt-3 pr-[7px] pl-[5px] text-sm leading-5">
        <h3 className="pl-[10px]">Values</h3>
        <div className="mt-[6px] flex h-[35px] items-center rounded-xs border border-dashed border-[#bebbb8] bg-white pl-3">Add data fields here</div>
        <h3 className="mt-[14px] pl-[10px] font-semibold text-[#484644]">Drill through</h3>
        <div className="mt-[11px] flex items-center justify-between pr-5 pl-[10px]">
          <span id="cross">Cross-report</span>
          <button type="button" role="switch" aria-checked="false" aria-labelledby="cross" className="flex h-5 w-10 items-center gap-[3px] rounded-full border border-[#8a8886] bg-white pl-[5px] text-[11px] text-[#605e5c]">
            <i className="size-[10px] rounded-full bg-[#605e5c]" />Off
          </button>
        </div>
        <div className="mt-[14px] flex items-center justify-between pr-5 pl-[10px]">
          <span id="keep">Keep all filters</span>
          <button type="button" role="switch" aria-checked="true" aria-labelledby="keep" className="flex h-5 w-10 items-center gap-1 rounded-full bg-[#117865] pl-[6px] text-[11px] text-white">
            On<i className="size-[10px] rounded-full bg-white" />
          </button>
        </div>
        <div className="mt-[13px] flex h-8 items-center rounded-xs border border-dashed border-[#bebbb8] bg-white pl-[10px] whitespace-nowrap">Add drill-through fields here</div>
      </div>
    </aside>
  );
}

/* ---------- data ---------- */

const fields: [string, boolean][] = [
  ["Country", false],
  ["Country_code", false],
  ["Date_reported", true],
  ["New_cases", true],
  ["New_deaths", true],
  ["Total_cases", true],
  ["Total_deaths", true],
  ["WHO_region", false],
];

function DataPane() {
  return (
    <aside className="w-[211px] shrink-0 overflow-hidden border-l border-[#d8d6d4] bg-[#f3f2f1] text-[#252423]">
      <div className="w-[226px]">
        <div className="flex h-[50px] items-center justify-between pr-[9px] pl-[10px]">
          <h2 className="text-lg leading-6 font-semibold">Data</h2>
          <button type="button" aria-label="Collapse data"><DoubleChevron /></button>
        </div>
        <label className="mt-[7px] ml-[5px] flex h-[30px] items-center rounded border border-[#d1d1d1] border-b-[#616161] bg-white pl-[14px]">
          <svg width="19" height="19" viewBox="0 0 19 19" fill="none" aria-hidden="true" className="shrink-0">
            <circle cx="8" cy="8" r="6.5" stroke="#616161" strokeWidth="1.3" />
            <path d="M12.5 12.5L18 18" stroke="#616161" strokeWidth="1.4" />
          </svg>
          <input type="text" aria-label="Search data" placeholder="Search" className="ml-2 w-full min-w-0 text-base outline-none placeholder:text-[#707070]" />
        </label>
        <div className="mt-[11px] flex h-[30px] items-center pl-4 text-sm">
          <svg width="16" height="10" viewBox="0 0 16 10" fill="none" aria-hidden="true"><path d="M1 1L8 8L15 1" stroke="#484644" strokeWidth="1.2" /></svg>
          <svg width="16" height="16" viewBox="0 0 16 16" fill="none" className="ml-1" aria-hidden="true">
            <rect x="1" y="1" width="14" height="14" rx="2.5" stroke="#252423" strokeWidth="1.5" />
            <path d="M1 5.5H15M1 10.5H15M5.5 1V15M10.5 1V15" stroke="#252423" strokeWidth="1.3" />
          </svg>
          <span className="ml-[7px] whitespace-nowrap">WHO-COVID-19-glob...</span>
        </div>
        <ul>
          {fields.map(([name, sum]) => (
            <li key={name}>
              <label className="flex h-[30px] items-center pl-[55px] text-sm">
                <input type="checkbox" className="size-[15px] shrink-0 appearance-none rounded-xs border border-[#7a7876] bg-[#f8f7f6]" />
                <span className="ml-[10px] flex w-[22px] shrink-0">
                  {sum && (
                    <svg width="14" height="16" viewBox="0 0 14 16" fill="none" aria-hidden="true">
                      <path d="M13 3V1H1L8 8L1 15H13V13" stroke="#252423" strokeWidth="1.3" />
                    </svg>
                  )}
                </span>
                {name}
              </label>
            </li>
          ))}
        </ul>
      </div>
    </aside>
  );
}

export default function App() {
  return (
    <div className="flex h-screen flex-col overflow-hidden bg-white font-['Noto_Sans','Open_Sans',sans-serif]">
      <Ribbon />
      <div className="flex min-h-0 flex-1">
        <div className="w-2 shrink-0 border-r border-[#dddbd9] bg-[#f0efee]" />
        <Canvas />
        <Filters />
        <Visualizations />
        <DataPane />
      </div>
    </div>
  );
}
